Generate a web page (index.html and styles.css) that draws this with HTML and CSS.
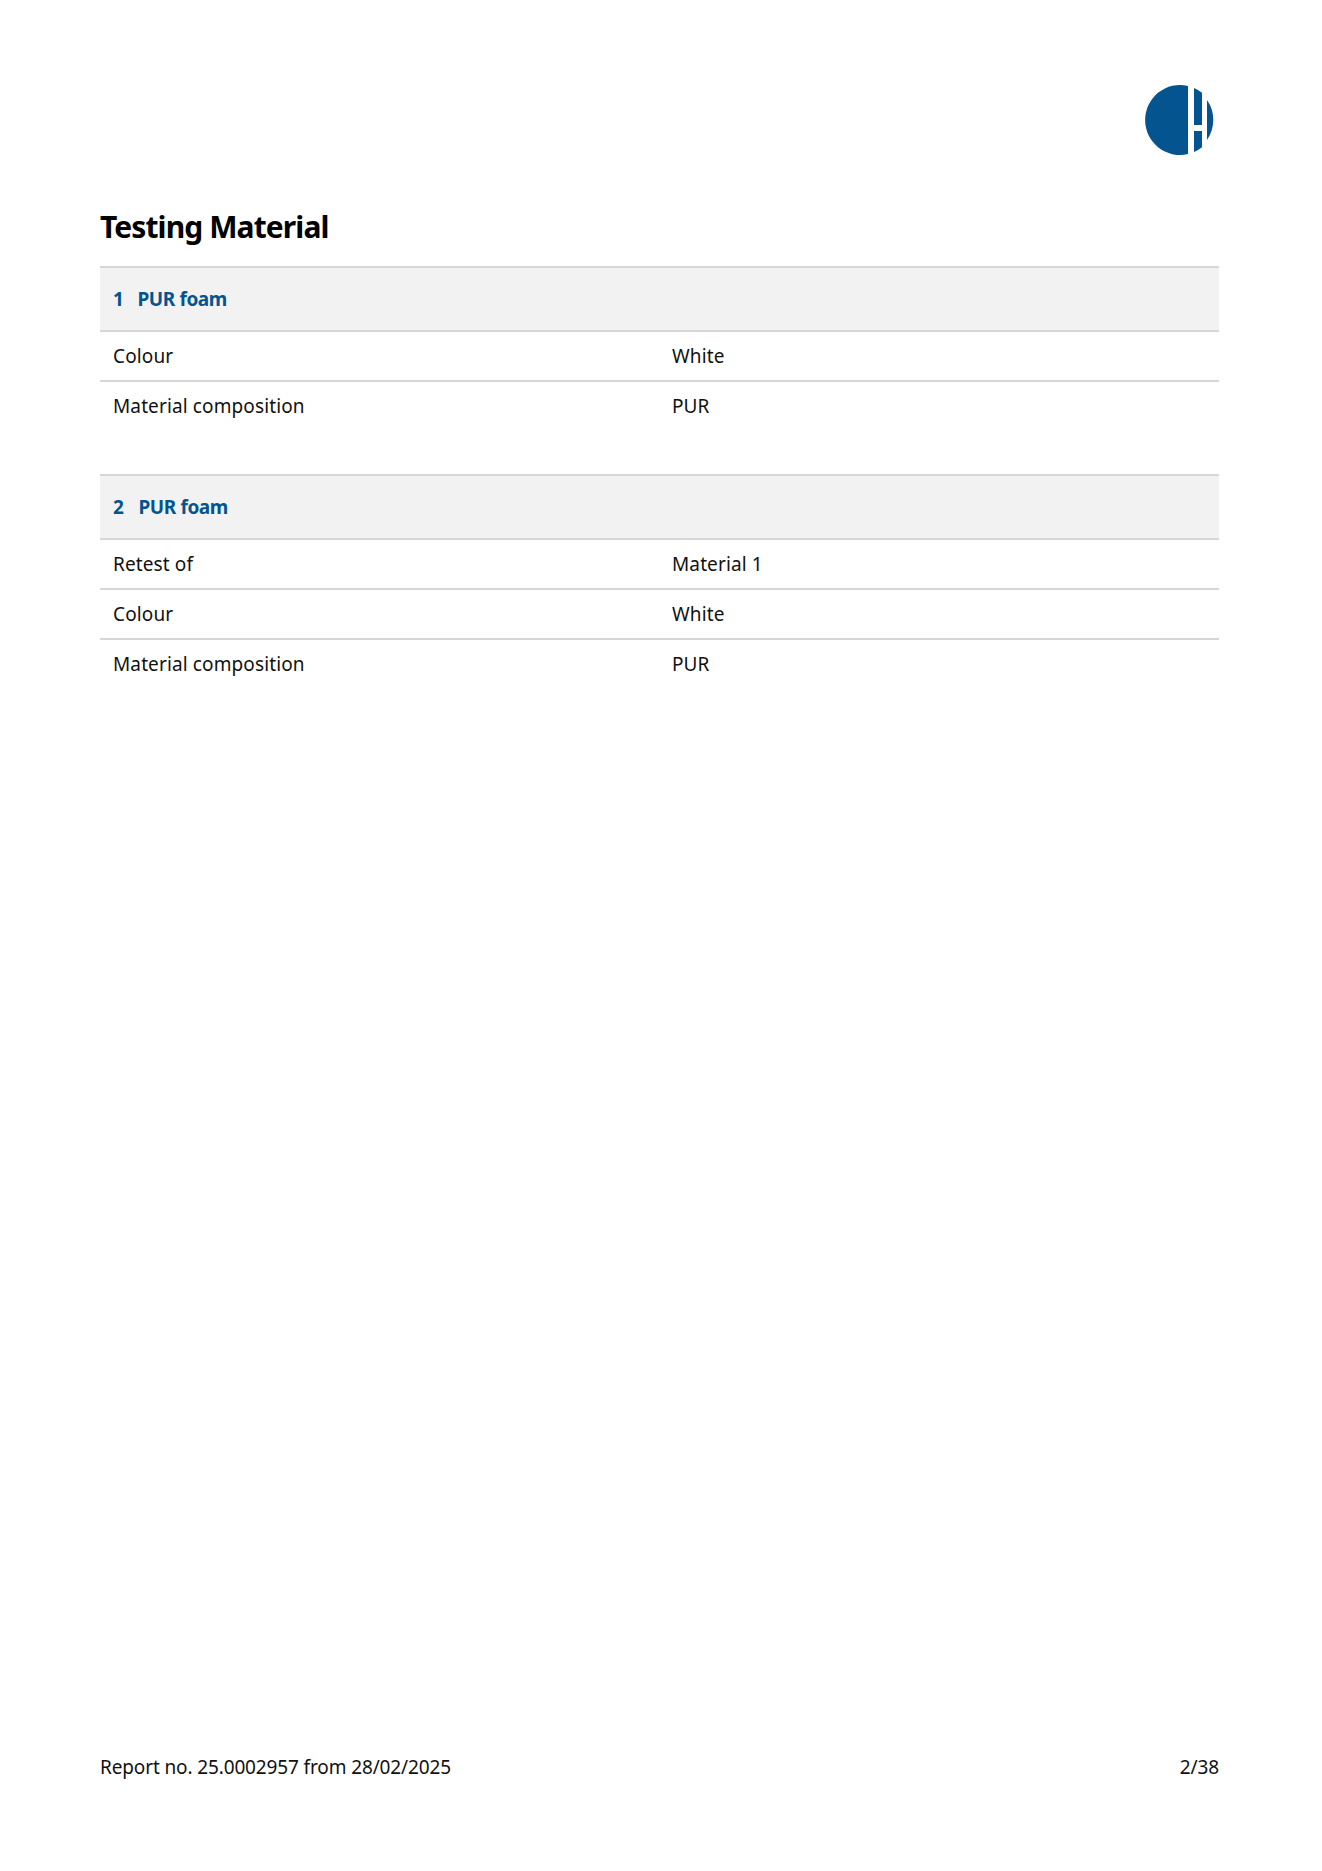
FILE: index.html
```html
<!DOCTYPE html>
<html lang="en">
<head>
<meta charset="utf-8">
<title>Testing Material</title>
<link rel="stylesheet" href="styles.css">
</head>
<body>
<div class="page">
  <header class="top">
    <svg class="logo" width="70" height="70" viewBox="0 0 70 70" aria-hidden="true">
      <path fill="#03548f" d="M43 0.9A35 35 0 1 0 43 69.1Z"/>
      <path fill="#03548f" d="M49 3A35 35 0 0 1 57 7.8V40H49Z"/>
      <path fill="#03548f" d="M49 46H57V62.2A35 35 0 0 1 49 67Z"/>
      <path fill="#03548f" d="M62 15A35 35 0 0 1 62 55Z"/>
    </svg>
  </header>
  <h1 class="title">Testing Material</h1>
  <section class="material">
    <h2 class="mat-head"><span class="num num-narrow">1</span>PUR foam</h2>
    <div class="row"><span class="key">Colour</span><span>White</span></div>
    <div class="row"><span class="key">Material composition</span><span>PUR</span></div>
  </section>
  <section class="material">
    <h2 class="mat-head"><span class="num">2</span>PUR foam</h2>
    <div class="row"><span class="key">Retest of</span><span>Material 1</span></div>
    <div class="row"><span class="key">Colour</span><span>White</span></div>
    <div class="row"><span class="key">Material composition</span><span>PUR</span></div>
  </section>
  <footer class="foot"><span>Report no. 25.0002957 from 28/02/2025</span><span>2/38</span></footer>
</div>
</body>
</html>
```
FILE: styles.css
```css
* { box-sizing: border-box; }
html, body { margin: 0; background: #fff; }
body { font-family: "Noto Sans", "Open Sans", sans-serif; color: #111; font-size: 19px; }
.page { width: 1322px; height: 1871px; padding: 85px 103px 0 100px; display: flex; flex-direction: column; }
.top { display: flex; justify-content: flex-end; padding-right: 4px; height: 70px; }
.logo { display: block; }
.title { margin: 51px 0 0; font-size: 30px; line-height: 42px; font-weight: 700; letter-spacing: -0.9px; color: #000; height: 60px; }
.material { margin-bottom: 42px; }
.mat-head { margin: 0; height: 66px; display: flex; align-items: center; padding-left: 13px; font-size: 19px; font-weight: 700; letter-spacing: -0.4px; color: #03548f; background: #f2f2f2; border-top: 2px solid #d6d6d6; border-bottom: 2px solid #d6d6d6; }
.num { margin-right: 15px; }
.num-narrow { margin-right: 14px; }
.row { display: flex; height: 50px; align-items: center; padding-left: 13px; letter-spacing: 0.12px; border-bottom: 2px solid #d6d6d6; }
.row:last-child { border-bottom-color: transparent; }
.key { width: 559px; }
.foot { margin-top: auto; margin-bottom: 91px; display: flex; justify-content: space-between; font-size: 19px; line-height: 26px; letter-spacing: -0.13px; }
```
